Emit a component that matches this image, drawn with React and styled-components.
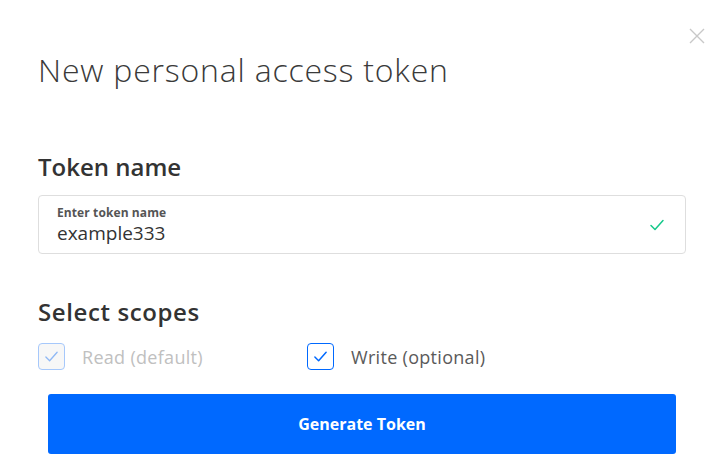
import React from 'react';
import styled, { createGlobalStyle } from 'styled-components';

const GlobalStyle = createGlobalStyle`
    body {
        margin: 0;
        background: #ffffff;
        font-family: "Open Sans", "Liberation Sans", sans-serif;
    }
`;

const Check = ({ color, size = 14, width = 1.6 }) => (
    <svg width={size} height={size} viewBox="0 0 16 16" fill="none">
        <path d="M2 8.5 L6 12.5 L14 3.5" stroke={color} strokeWidth={width} strokeLinecap="round" strokeLinejoin="round" />
    </svg>
);

const App = () => {
    return (
        <>
            <GlobalStyle />
            <Modal>
                <CloseButton aria-label="close">
                    <svg width="16" height="16" viewBox="0 0 16 16">
                        <path d="M1 1 L15 15 M15 1 L1 15" stroke="#c8c8c8" strokeWidth="1.4" />
                    </svg>
                </CloseButton>
                <Title>New personal access token</Title>
                <SectionTitle>Token name</SectionTitle>
                <Field>
                    <FieldText>
                        <FieldLabel>Enter token name</FieldLabel>
                        <FieldValue>example333</FieldValue>
                    </FieldText>
                    <Check color="#15c88a" size={16} width={1.5} />
                </Field>
                <ScopesTitle>Select scopes</ScopesTitle>
                <ScopeRow>
                    <Scope>
                        <Box $disabled>
                            <Check color="#8fb8f5" size={15} width={1.4} />
                        </Box>
                        <ScopeLabel $disabled>Read (default)</ScopeLabel>
                    </Scope>
                    <Scope>
                        <Box>
                            <Check color="#0069ff" size={15} width={1.6} />
                        </Box>
                        <ScopeLabel>Write (optional)</ScopeLabel>
                    </Scope>
                </ScopeRow>
                <SubmitButton>Generate Token</SubmitButton>
            </Modal>
        </>
    );
};

export default App;

const Modal = styled.div`
    position: relative;
    width: 727px;
    height: 466px;
    box-sizing: border-box;
    padding: 48px 41px 0 38px;
    display: flex;
    flex-direction: column;
    overflow: hidden;
`

const CloseButton = styled.button`
    position: absolute;
    top: 28px;
    right: 22px;
    padding: 0;
    border: none;
    background: none;
    display: flex;
`

const Title = styled.h1`
    margin: 0;
    font-size: 32px;
    font-weight: 300;
    line-height: 44px;
    color: #3a3a3a;
    letter-spacing: 0.8px;
`

const SectionTitle = styled.h2`
    margin: 59px 0 0 0;
    font-size: 24px;
    font-weight: 600;
    line-height: 32px;
    color: #333333;
    letter-spacing: 0px;
`

const ScopesTitle = styled(SectionTitle)`
    margin-top: 42px;
    letter-spacing: 0.6px;
`

const Field = styled.div`
    margin-top: 12px;
    height: 59px;
    box-sizing: border-box;
    border: 1px solid #dedede;
    border-radius: 4px;
    padding: 0 20px 0 18px;
    display: flex;
    align-items: center;
    justify-content: space-between;
`

const FieldText = styled.div`
    display: flex;
    flex-direction: column;
`

const FieldLabel = styled.span`
    font-size: 12px;
    font-weight: 700;
    line-height: 16px;
    color: #555555;
    letter-spacing: 0.1px;
`

const FieldValue = styled.span`
    font-size: 19px;
    line-height: 24px;
    color: #333333;
`

const ScopeRow = styled.div`
    margin-top: 15px;
    display: flex;
    align-items: center;
`

const Scope = styled.label`
    width: 269px;
    display: flex;
    align-items: center;
    gap: 17px;
`

const Box = styled.span`
    width: 27px;
    height: 27px;
    box-sizing: border-box;
    border: 1px solid ${p => (p.$disabled ? '#a6c8fb' : '#0069ff')};
    background: ${p => (p.$disabled ? '#f7f7f7' : '#ffffff')};
    border-radius: 4px;
    display: flex;
    align-items: center;
    justify-content: center;
`

const ScopeLabel = styled.span`
    font-size: 18px;
    color: ${p => (p.$disabled ? '#c0c0c0' : '#5a5a5a')};
    letter-spacing: 0.3px;
`

const SubmitButton = styled.button`
    margin: 24px 10px 0 10px;
    height: 60px;
    border: none;
    border-radius: 3px;
    background: #0069ff;
    color: #ffffff;
    font-family: "Open Sans", "Liberation Sans", sans-serif;
    font-size: 16px;
    font-weight: 700;
    letter-spacing: 0px;
`
